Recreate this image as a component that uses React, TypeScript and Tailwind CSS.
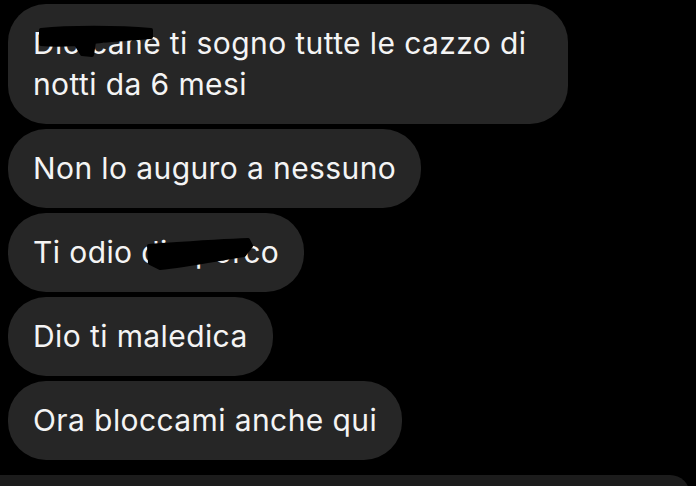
import React from 'react';

const Bubble: React.FC<{ children: React.ReactNode; className?: string }> = ({ children, className = '' }) => (
  <div className={`relative rounded-[38px] bg-[#262626] px-[25px] py-[19px] text-[30px] leading-[41px] tracking-[0.4px] text-[#f4f4f4] ${className}`}>
    {children}
  </div>
);

// black marker scribble drawn over part of the text
const Scribble: React.FC<{ d: string }> = ({ d }) => (
  <svg className="pointer-events-none absolute inset-0 h-full w-full">
    <path d={d} fill="#000" stroke="#000" strokeWidth="4" strokeLinejoin="round" />
  </svg>
);

const App: React.FC = () => {
  return (
    <div
      className="flex h-[486px] w-[696px] flex-col overflow-hidden bg-black"
      style={{ fontFamily: 'Inter, Roboto, sans-serif' }}
    >
      <div className="flex flex-col items-start gap-[5px] pl-2 pt-1">
        <Bubble className="w-[560px]">
          Dio cane ti sogno tutte le cazzo di notti da 6 mesi
          <Scribble d="M33 26 C60 23, 110 23, 143 26 L143 33 C120 35, 100 36, 86 38 L84 51 L74 50 L68 40 C55 41, 42 41, 33 40 Z" />
        </Bubble>
        <Bubble>Non lo auguro a nessuno</Bubble>
        <Bubble>
          Ti odio dio porco
          <Scribble d="M141 33 C170 31, 210 28, 240 27 L243 33 L236 42 C210 46, 180 52, 152 55 L142 50 Z" />
        </Bubble>
        <Bubble>Dio ti maledica</Bubble>
        <Bubble>Ora bloccami anche qui</Bubble>
      </div>
      <div className="mt-[15px] h-[20px] w-[690px] shrink-0 rounded-tr-[24px] bg-[#1c1c1c]" />
    </div>
  );
};

export default App;
